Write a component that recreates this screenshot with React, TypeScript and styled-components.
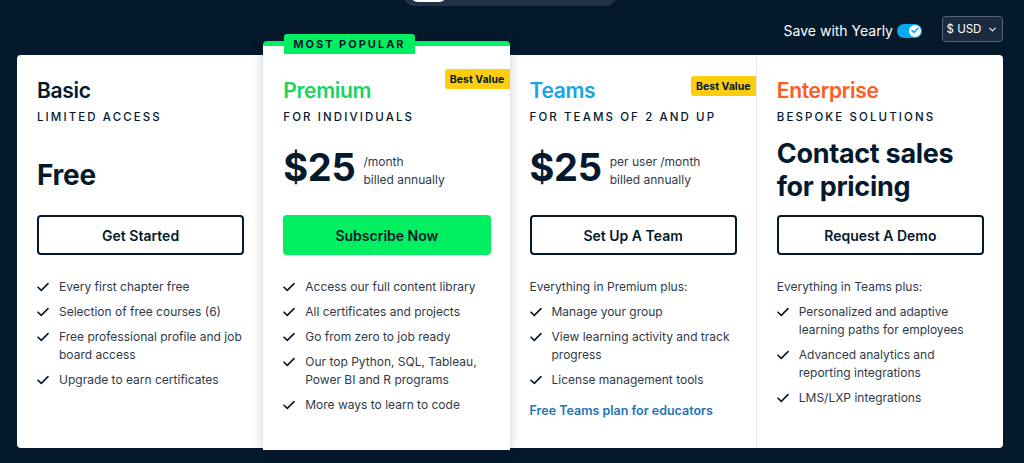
import React from "react";
import styled, { createGlobalStyle } from "styled-components";
import { ChevronDown } from "lucide-react";

const GlobalStyle = createGlobalStyle`
  html, body { margin: 0; padding: 0; background: #05192d; }
  body { font-family: Inter, "Noto Sans", sans-serif; color: #05192d; overflow: hidden; }
  * { box-sizing: border-box; }
`;

const Page = styled.div`
  width: 1024px;
  height: 463px;
  padding: 0 21px 0 17px;
  overflow: hidden;
  background: #05192d;
`;

const TopTabs = styled.div`
  width: 214px;
  height: 40px;
  margin: -34px auto 0;
  padding: 4px 7px;
  background: #213147;
  border-radius: 12px;
  display: flex;
`;

const TabActive = styled.div`
  width: 37px;
  height: 32px;
  background: #ffffff;
  border-radius: 8px;
`;

const HeaderRow = styled.div`
  margin-top: 10px;
  height: 26px;
  display: flex;
  justify-content: flex-end;
  align-items: center;
  gap: 20px;
`;

const ToggleLabel = styled.div`
  display: flex;
  align-items: center;
  gap: 4px;
  color: #ffffff;
  font-size: 14px;
  font-weight: 400;
  margin-top: 3px;
`;

const Switch = styled.div`
  width: 25px;
  height: 14px;
  border-radius: 7px;
  background: #08a9f0;
  display: flex;
  align-items: center;
  justify-content: flex-end;
  padding: 1px;
`;

const Knob = styled.div`
  width: 12px;
  height: 12px;
  border-radius: 50%;
  background: #ffffff;
  display: flex;
  align-items: center;
  justify-content: center;
`;

const CurrencyButton = styled.div`
  width: 61px;
  height: 26px;
  border: 1px solid #56647a;
  border-radius: 4px;
  background: #1a2a3f;
  color: #ffffff;
  font-size: 11.5px;
  font-weight: 400;
  display: flex;
  align-items: center;
  justify-content: center;
  gap: 6px;
`;

const Cards = styled.div`
  margin-top: 13px;
  display: flex;
  height: 393px;
`;

const Card = styled.div<{ $featured?: boolean; $first?: boolean; $last?: boolean }>`
  flex: 1;
  position: relative;
  background: #ffffff;
  display: flex;
  flex-direction: column;
  padding: ${(p) => (p.$featured ? "31px" : "22px")} 19px 20px 20px;
  margin-top: ${(p) => (p.$featured ? "-14px" : "0")};
  margin-bottom: ${(p) => (p.$featured ? "-2px" : "0")};
  border-top: ${(p) => (p.$featured ? "5px solid #03ef62" : "none")};
  border-left: ${(p) => (p.$last ? "1px solid #e3e6ea" : "none")};
  border-radius: ${(p) => (p.$first ? "4px 0 0 4px" : p.$last ? "0 4px 4px 0" : p.$featured ? "4px 4px 0 0" : "0")};
  box-shadow: ${(p) => (p.$featured ? "0 0 12px rgba(5, 25, 45, 0.22)" : "none")};
  z-index: ${(p) => (p.$featured ? 2 : 1)};
`;

const PopularTag = styled.div`
  position: absolute;
  top: -12px;
  left: 21px;
  height: 20px;
  padding: 0 9px;
  background: #03ef62;
  border-radius: 3px 3px 0 0;
  color: #05192d;
  font-size: 11px;
  font-weight: 700;
  letter-spacing: 2px;
  display: flex;
  align-items: center;
`;

const BestValue = styled.div<{ $top: number }>`
  position: absolute;
  top: ${(p) => p.$top}px;
  right: 0;
  width: 65px;
  height: 20px;
  background: #fcce0d;
  border-radius: 3px 0 0 3px;
  color: #05192d;
  font-size: 10.5px;
  font-weight: 700;
  display: flex;
  align-items: center;
  justify-content: center;
`;

const Title = styled.div<{ $color: string }>`
  font-size: 21px;
  line-height: 28px;
  font-weight: 600;
  letter-spacing: -0.3px;
  color: ${(p) => p.$color};
`;

const Subtitle = styled.div`
  margin-top: 4px;
  font-size: 11.5px;
  line-height: 16px;
  font-weight: 500;
  letter-spacing: 2.1px;
  text-transform: uppercase;
  color: #05192d;
`;

const PriceArea = styled.div`
  height: 84px;
  display: flex;
  align-items: center;
`;

const PriceRow = styled.div<{ $shift?: number }>`
  display: flex;
  align-items: flex-end;
  gap: 8px;
  margin-top: ${(p) => p.$shift ?? 0}px;
`;

const BigText = styled.div<{ $size: number; $lh: number }>`
  font-size: ${(p) => p.$size}px;
  line-height: ${(p) => p.$lh}px;
  font-weight: 700;
  color: #05192d;
  letter-spacing: -0.3px;
`;

const PriceNote = styled.div`
  font-size: 12px;
  line-height: 18px;
  color: #30394a;
`;

const ActionButton = styled.div<{ $primary?: boolean }>`
  margin-top: 6px;
  height: 40px;
  border-radius: 4px;
  border: ${(p) => (p.$primary ? "none" : "2px solid #05192d")};
  background: ${(p) => (p.$primary ? "#03ef62" : "#ffffff")};
  color: #05192d;
  font-size: 14px;
  font-weight: 600;
  display: flex;
  align-items: center;
  justify-content: center;
`;

const FeatureList = styled.div`
  margin-top: 23px;
  display: flex;
  flex-direction: column;
  gap: 7px;
`;

const Intro = styled.div`
  font-size: 12px;
  line-height: 18px;
  color: #30394a;
`;

const Item = styled.div`
  display: grid;
  grid-template-columns: 22px 1fr;
  font-size: 12px;
  line-height: 18px;
  color: #30394a;
`;

const CheckBox = styled.div`
  height: 18px;
  display: flex;
  align-items: center;
`;

const TeamsLink = styled.div`
  margin-top: 6px;
  font-size: 12.5px;
  line-height: 18px;
  font-weight: 600;
  color: #2274b8;
`;

const Check = () => (
  <svg width="12" height="10" viewBox="0 0 12 10" fill="none">
    <path d="M1 5.2 4.3 8.4 11 1.6" stroke="#05192d" strokeWidth="1.6" strokeLinecap="round" strokeLinejoin="round" />
  </svg>
);

const KnobCheck = () => (
  <svg width="8" height="7" viewBox="0 0 8 7" fill="none">
    <path d="M1 3.6 3 5.5 7 1.3" stroke="#08a9f0" strokeWidth="1.5" strokeLinecap="round" strokeLinejoin="round" />
  </svg>
);

const Features = ({ intro, items, link }: { intro?: string; items: string[]; link?: string }) => (
  <FeatureList>
    {intro && <Intro>{intro}</Intro>}
    {items.map((t) => (
      <Item key={t}>
        <CheckBox>
          <Check />
        </CheckBox>
        <span>{t}</span>
      </Item>
    ))}
    {link && <TeamsLink>{link}</TeamsLink>}
  </FeatureList>
);

export default function App() {
  return (
    <>
      <GlobalStyle />
      <Page>
        <TopTabs>
          <TabActive />
        </TopTabs>
        <HeaderRow>
          <ToggleLabel>
            Save with Yearly
            <Switch>
              <Knob>
                <KnobCheck />
              </Knob>
            </Switch>
          </ToggleLabel>
          <CurrencyButton>
            $ USD <ChevronDown size={11} strokeWidth={2.2} />
          </CurrencyButton>
        </HeaderRow>
        <Cards>
          <Card $first>
            <Title $color="#05192d">Basic</Title>
            <Subtitle>Limited Access</Subtitle>
            <PriceArea>
              <PriceRow $shift={16}>
                <BigText $size={28} $lh={36}>Free</BigText>
              </PriceRow>
            </PriceArea>
            <ActionButton>Get Started</ActionButton>
            <Features
              items={[
                "Every first chapter free",
                "Selection of free courses (6)",
                "Free professional profile and job board access",
                "Upgrade to earn certificates",
              ]}
            />
          </Card>
          <Card $featured>
            <PopularTag>MOST POPULAR</PopularTag>
            <BestValue $top={23}>Best Value</BestValue>
            <Title $color="#1ad45f">Premium</Title>
            <Subtitle>For Individuals</Subtitle>
            <PriceArea>
              <PriceRow>
                <BigText $size={38} $lh={44}>$25</BigText>
                <PriceNote>
                  /month
                  <br />
                  billed annually
                </PriceNote>
              </PriceRow>
            </PriceArea>
            <ActionButton $primary>Subscribe Now</ActionButton>
            <Features
              items={[
                "Access our full content library",
                "All certificates and projects",
                "Go from zero to job ready",
                "Our top Python, SQL, Tableau, Power BI and R programs",
                "More ways to learn to code",
              ]}
            />
          </Card>
          <Card>
            <BestValue $top={21}>Best Value</BestValue>
            <Title $color="#14a6e6">Teams</Title>
            <Subtitle>For Teams of 2 and up</Subtitle>
            <PriceArea>
              <PriceRow>
                <BigText $size={38} $lh={44}>$25</BigText>
                <PriceNote>
                  per user /month
                  <br />
                  billed annually
                </PriceNote>
              </PriceRow>
            </PriceArea>
            <ActionButton>Set Up A Team</ActionButton>
            <Features
              intro="Everything in Premium plus:"
              items={["Manage your group", "View learning activity and track progress", "License management tools"]}
              link="Free Teams plan for educators"
            />
          </Card>
          <Card $last>
            <Title $color="#ff5b22">Enterprise</Title>
            <Subtitle>Bespoke Solutions</Subtitle>
            <PriceArea>
              <PriceRow $shift={5}>
                <BigText $size={27} $lh={33}>
                  Contact sales
                  <br />
                  for pricing
                </BigText>
              </PriceRow>
            </PriceArea>
            <ActionButton>Request A Demo</ActionButton>
            <Features
              intro="Everything in Teams plus:"
              items={[
                "Personalized and adaptive learning paths for employees",
                "Advanced analytics and reporting integrations",
                "LMS/LXP integrations",
              ]}
            />
          </Card>
        </Cards>
      </Page>
    </>
  );
}
